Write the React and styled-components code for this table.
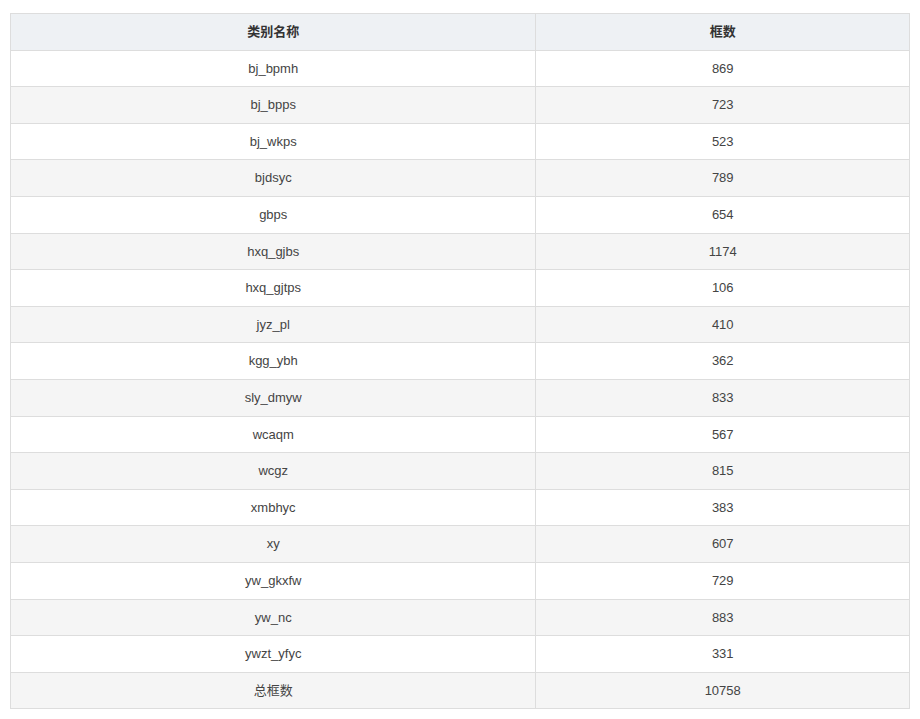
import React from "react";
import styled, { createGlobalStyle } from "styled-components";

const Global = createGlobalStyle`
  html, body { margin: 0; padding: 0; background: #fff; }
  body { font-family: "Liberation Sans", Arial, "Noto Sans CJK SC", sans-serif; }
`;

const Page = styled.div`
  padding: 13px 10px 10px 10px;
  width: 900px;
`;

const Table = styled.table`
  width: 100%;
  border-collapse: collapse;
  table-layout: fixed;
  font-size: 13px;
  color: #444;
  border: 1px solid #ddd;
`;

const Col = styled.col`
  width: ${(p) => p.$w};
`;

const Th = styled.th`
  background: #eef1f4;
  color: #333;
  font-weight: bold;
  text-align: center;
  padding: 8px;
  line-height: 19.6px;
  border: 1px solid #ddd;
`;

const Tr = styled.tr`
  background: ${(p) => (p.$stripe ? "#f5f5f5" : "#fff")};
`;

const Td = styled.td`
  text-align: center;
  padding: 8px;
  line-height: 19.6px;
  border: 1px solid #ddd;
`;

const rows = [
  ["bj_bpmh", "869"],
  ["bj_bpps", "723"],
  ["bj_wkps", "523"],
  ["bjdsyc", "789"],
  ["gbps", "654"],
  ["hxq_gjbs", "1174"],
  ["hxq_gjtps", "106"],
  ["jyz_pl", "410"],
  ["kgg_ybh", "362"],
  ["sly_dmyw", "833"],
  ["wcaqm", "567"],
  ["wcgz", "815"],
  ["xmbhyc", "383"],
  ["xy", "607"],
  ["yw_gkxfw", "729"],
  ["yw_nc", "883"],
  ["ywzt_yfyc", "331"],
  ["总框数", "10758"],
];

export default function App() {
  return (
    <Page>
      <Global />
      <Table>
        <colgroup>
          <Col $w="58.45%" />
          <Col $w="41.55%" />
        </colgroup>
        <thead>
          <tr>
            <Th>类别名称</Th>
            <Th>框数</Th>
          </tr>
        </thead>
        <tbody>
          {rows.map(([name, n], i) => (
            <Tr key={name} $stripe={i % 2 === 1}>
              <Td>{name}</Td>
              <Td>{n}</Td>
            </Tr>
          ))}
        </tbody>
      </Table>
    </Page>
  );
}
